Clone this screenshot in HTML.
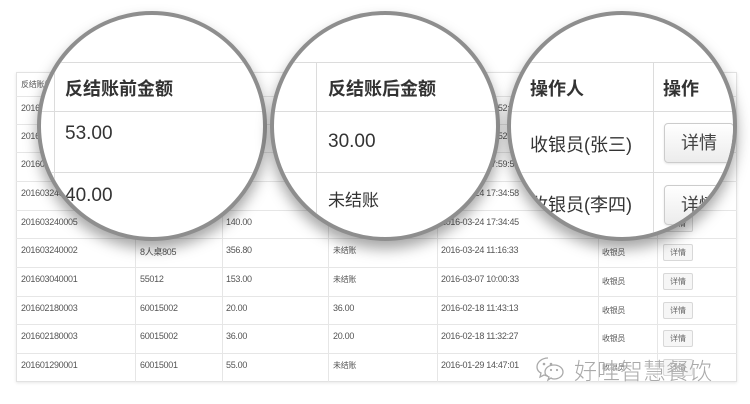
<!DOCTYPE html>
<html style="overflow:hidden;width:750px;height:404px"><head><meta charset="utf-8">
<style>
*{margin:0;padding:0;box-sizing:border-box}
body{width:750px;height:404px;background:#fff;position:relative;overflow:hidden;font-family:"Liberation Sans","Noto Sans CJK SC",sans-serif}
.t{position:absolute;left:16px;top:72px;width:721px;height:310px;border:1px solid #e2e2e2;box-shadow:0 1px 3px rgba(0,0,0,.1)}
.h{position:absolute;background:#e6e6e6;height:1px}
.v{position:absolute;background:#e6e6e6;width:1px}
.c{position:absolute;font-size:9px;color:#555;white-space:nowrap;letter-spacing:-0.3px}
.b{position:absolute;width:30px;height:17px;border:1px solid #d8d8d8;background:#f6f6f6;border-radius:2px;font-size:8px;color:#666;text-align:center;line-height:15px}
.circ{position:absolute;width:230px;height:230px;border-radius:50%;overflow:hidden;background:#fff;border:4px solid #8e8e8e;box-shadow:0 8px 14px rgba(0,0,0,.35)}
.in{position:absolute;left:0;top:0;width:0;height:0}
.m{position:absolute;white-space:nowrap;color:#333}
.mh{position:absolute;height:1px;background:#dcdcdc;left:0;width:760px}
.mv{position:absolute;width:1px;background:#dcdcdc;top:62px;height:200px}
.mb{position:absolute;width:70px;height:40px;border:1px solid #ccc;border-radius:4px;background:linear-gradient(#fff,#ececec);font-size:18px;color:#444;text-align:center;line-height:38px;box-shadow:0 1px 2px rgba(0,0,0,.1)}
</style></head><body>
<div class="t"></div>
<div class="h" style="left:16px;width:721px;top:96px"></div>
<div class="h" style="left:16px;width:721px;top:124px"></div>
<div class="h" style="left:16px;width:721px;top:152px"></div>
<div class="h" style="left:16px;width:721px;top:181px"></div>
<div class="h" style="left:16px;width:721px;top:210px"></div>
<div class="h" style="left:16px;width:721px;top:238px"></div>
<div class="h" style="left:16px;width:721px;top:267px"></div>
<div class="h" style="left:16px;width:721px;top:296px"></div>
<div class="h" style="left:16px;width:721px;top:324px"></div>
<div class="h" style="left:16px;width:721px;top:353px"></div>
<div class="v" style="left:135px;top:72px;height:310px"></div>
<div class="v" style="left:222px;top:72px;height:310px"></div>
<div class="v" style="left:328px;top:72px;height:310px"></div>
<div class="v" style="left:437px;top:72px;height:310px"></div>
<div class="v" style="left:598px;top:72px;height:310px"></div>
<div class="v" style="left:657px;top:72px;height:310px"></div>

<div class="c" style="left:21px;top:79px;font-size:8px">反结账单号</div>
<div class="c" style="left:21px;top:103px">201603250001</div>
<div class="c" style="left:21px;top:131px">201603250001</div>
<div class="c" style="left:21px;top:159px">201603240007</div>
<div class="c" style="left:21px;top:188px">201603240006</div>
<div class="c" style="left:441px;top:103px">2016-03-25 10:52:29</div>
<div class="c" style="left:441px;top:131px">2016-03-25 10:52:11</div>
<div class="c" style="left:441px;top:159px">2016-03-24 17:59:59</div>
<div class="c" style="left:441px;top:188px">2016-03-24 17:34:58</div>

<div class="c" style="left:21px;top:217px">201603240005</div><div class="c" style="left:226px;top:217px">140.00</div><div class="c" style="left:441px;top:217px">2016-03-24 17:34:45</div><div class="b" style="left:663px;top:215px">详情</div>
<div class="c" style="left:21px;top:245px">201603240002</div><div class="c" style="left:140px;top:245px">8人桌805</div><div class="c" style="left:226px;top:245px">356.80</div><div class="c" style="left:333px;top:245px;font-size:8px">未结账</div><div class="c" style="left:441px;top:245px">2016-03-24 11:16:33</div><div class="c" style="left:602px;top:247px;font-size:8px">收银员</div><div class="b" style="left:663px;top:244px">详情</div>
<div class="c" style="left:21px;top:274px">201603040001</div><div class="c" style="left:140px;top:274px">55012</div><div class="c" style="left:226px;top:274px">153.00</div><div class="c" style="left:333px;top:274px;font-size:8px">未结账</div><div class="c" style="left:441px;top:274px">2016-03-07 10:00:33</div><div class="c" style="left:602px;top:276px;font-size:8px">收银员</div><div class="b" style="left:663px;top:273px">详情</div>
<div class="c" style="left:21px;top:303px">201602180003</div><div class="c" style="left:140px;top:303px">60015002</div><div class="c" style="left:226px;top:303px">20.00</div><div class="c" style="left:333px;top:303px">36.00</div><div class="c" style="left:441px;top:303px">2016-02-18 11:43:13</div><div class="c" style="left:602px;top:305px;font-size:8px">收银员</div><div class="b" style="left:663px;top:302px">详情</div>
<div class="c" style="left:21px;top:331px">201602180003</div><div class="c" style="left:140px;top:331px">60015002</div><div class="c" style="left:226px;top:331px">36.00</div><div class="c" style="left:333px;top:331px">20.00</div><div class="c" style="left:441px;top:331px">2016-02-18 11:32:27</div><div class="c" style="left:602px;top:333px;font-size:8px">收银员</div><div class="b" style="left:663px;top:330px">详情</div>
<div class="c" style="left:21px;top:360px">201601290001</div><div class="c" style="left:140px;top:360px">60015001</div><div class="c" style="left:226px;top:360px">55.00</div><div class="c" style="left:333px;top:360px;font-size:8px">未结账</div><div class="c" style="left:441px;top:360px">2016-01-29 14:47:01</div><div class="c" style="left:602px;top:362px;font-size:8px">收银员</div><div class="b" style="left:663px;top:359px">详情</div>

<div class="circ" style="left:37px;top:11px">
 <div class="in" style="left:-41px;top:-15px">
  <div class="mh" style="top:62px"></div><div class="mh" style="top:111px"></div><div class="mh" style="top:172px"></div>
  <div class="mv" style="left:54px"></div>
  <div class="m" style="left:65px;top:75px;font-size:18px;font-weight:bold">反结账前金额</div>
  <div class="m" style="left:65px;top:123px;font-size:19px">53.00</div>
  <div class="m" style="left:65px;top:185px;font-size:19px">40.00</div>
 </div>
</div>
<div class="circ" style="left:270px;top:11px">
 <div class="in" style="left:-274px;top:-15px">
  <div class="mh" style="top:62px"></div><div class="mh" style="top:111px"></div><div class="mh" style="top:172px"></div>
  <div class="mv" style="left:316px"></div>
  <div class="m" style="left:328px;top:75px;font-size:18px;font-weight:bold">反结账后金额</div>
  <div class="m" style="left:328px;top:131px;font-size:19px">30.00</div>
  <div class="m" style="left:328px;top:186px;font-size:17px">未结账</div>
 </div>
</div>
<div class="circ" style="left:507px;top:11px">
 <div class="in" style="left:-511px;top:-15px">
  <div class="mh" style="top:62px"></div><div class="mh" style="top:111px"></div><div class="mh" style="top:172px"></div>
  <div class="mv" style="left:653px"></div>
  <div class="m" style="left:530px;top:75px;font-size:18px;font-weight:bold">操作人</div>
  <div class="m" style="left:663px;top:75px;font-size:18px;font-weight:bold">操作</div>
  <div class="m" style="left:530px;top:131px;font-size:18px">收银员(张三)</div>
  <div class="m" style="left:530px;top:191px;font-size:18px">收银员(李四)</div>
  <div class="mb" style="left:664px;top:123px">详情</div>
  <div class="mb" style="left:664px;top:185px">详情</div>
 </div>
</div>

<svg style="position:absolute;left:534px;top:354px" width="34" height="30" viewBox="0 0 34 30"><g fill="none" stroke="#aaa" stroke-width="1.3"><path d="M14 4c-6 0-11 4-11 9 0 3 2 5 4 6l-1 4 4-2c1 0 2 1 4 1"/><path d="M20 11c5 0 9 3 9 7s-4 7-9 7c-1 0-2 0-3-1l-3 2 1-3c-3-1-4-3-4-5 0-4 4-7 9-7z"/></g><circle cx="10" cy="10" r="1.3" fill="#aaa"/><circle cx="17" cy="10" r="1.3" fill="#aaa"/><circle cx="17" cy="16" r="1.1" fill="#aaa"/><circle cx="23" cy="16" r="1.1" fill="#aaa"/></svg>
<div style="position:absolute;left:574px;top:352px;font-size:23px;color:#aaa;font-family:'Noto Sans CJK SC',sans-serif;font-weight:300;white-space:nowrap;text-shadow:0 0 2px #fff">好哇智慧餐饮</div>
</body></html>
